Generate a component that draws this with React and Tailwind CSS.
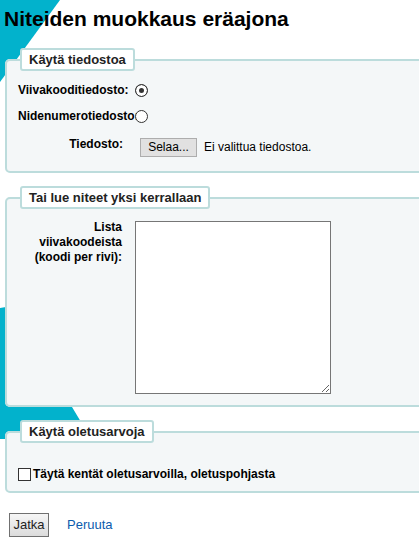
export default function App() {
  return (
    <div className="relative w-[419px] h-[546px] overflow-hidden bg-white text-black font-['Liberation_Sans',Arial,sans-serif]">
      {/* Background decoration */}
      <svg className="absolute inset-0" width="419" height="546" viewBox="0 0 419 546">
        <polygon points="0,0 60,0 0,82" fill="#02b2cc" />
        <polygon points="0,308 60,298 66,397 84,427 84,439 0,439" fill="#02b2cc" />
      </svg>

      <div className="relative">
        <h1 className="ml-[4px] pt-[7px] text-[21px] leading-[24px] font-bold">Niteiden muokkaus eräajona</h1>

        {/* Käytä tiedostoa */}
        <fieldset className="mt-[17px] ml-[5px] w-[440px] border-2 border-[#bcdcdc] rounded-[5px] bg-[#f4f7f8] px-[11px] pb-[14px]">
          <legend className="ml-[2px] px-[7px] py-[2px] border-2 border-[#bcdcdc] rounded-[3px] bg-white text-[13px] leading-[15px] font-bold text-[#222]">
            Käytä tiedostoa
          </legend>
          <div className="mt-[9px] flex items-center h-[20px]">
            <label htmlFor="barcode_file" className="w-[117px] shrink-0 whitespace-nowrap text-[12px] font-bold">
              Viivakooditiedosto:
            </label>
            <input
              id="barcode_file"
              type="radio"
              name="filecontent"
              defaultChecked
              className="appearance-none m-0 w-[13px] h-[13px] rounded-full border border-[#333] bg-white checked:bg-[#333] checked:shadow-[inset_0_0_0_3px_white]"
            />
          </div>
          <div className="mt-[6px] flex items-center h-[20px]">
            <label htmlFor="itemid_file" className="w-[117px] shrink-0 whitespace-nowrap text-[12px] font-bold">
              Nidenumerotiedosto:
            </label>
            <input
              id="itemid_file"
              type="radio"
              name="filecontent"
              className="appearance-none m-0 w-[13px] h-[13px] rounded-full border border-[#333] bg-white checked:bg-[#333] checked:shadow-[inset_0_0_0_3px_white]"
            />
          </div>
          <div className="mt-[11px] flex items-start">
            <label className="w-[105px] shrink-0 text-right text-[12px] leading-[14px] font-bold">Tiedosto:</label>
            <button className="ml-[17px] mt-[1px] w-[57px] h-[19px] border border-[#adadad] bg-[#e1e1e1] text-[12px] leading-[17px]">
              Selaa...
            </button>
            <span className="ml-[7px] mt-[1px] text-[12px] leading-[19px]">Ei valittua tiedostoa.</span>
          </div>
        </fieldset>

        {/* Tai lue niteet yksi kerrallaan */}
        <fieldset className="mt-[13px] ml-[5px] w-[440px] border-2 border-[#bcdcdc] rounded-[5px] bg-[#f4f7f8] px-[11px] pb-[11px]">
          <legend className="ml-[2px] px-[7px] py-[2px] border-2 border-[#bcdcdc] rounded-[3px] bg-white text-[13px] leading-[15px] font-bold text-[#222]">
            Tai lue niteet yksi kerrallaan
          </legend>
          <div className="mt-[11px] flex items-start">
            <label htmlFor="barcodelist" className="w-[104px] shrink-0 text-right text-[12px] leading-[15px] font-bold">
              Lista
              <br />
              viivakoodeista
              <br />
              (koodi per rivi):
            </label>
            <textarea
              id="barcodelist"
              className="ml-[13px] mt-[1px] w-[196px] h-[173px] border border-[#767676] bg-white"
            />
          </div>
        </fieldset>

        {/* Käytä oletusarvoja */}
        <fieldset className="mt-[13px] ml-[5px] w-[440px] border-2 border-[#bcdcdc] rounded-[5px] bg-[#f4f7f8] px-[11px] pb-[10px]">
          <legend className="ml-[2px] px-[7px] py-[2px] border-2 border-[#bcdcdc] rounded-[3px] bg-white text-[13px] leading-[15px] font-bold text-[#222]">
            Käytä oletusarvoja
          </legend>
          <div className="mt-[24px] flex items-center h-[14px]">
            <input
              id="usedefaults"
              type="checkbox"
              className="appearance-none m-0 w-[13px] h-[13px] border border-[#333] bg-white"
            />
            <label htmlFor="usedefaults" className="ml-[2px] text-[12px] font-bold">
              Täytä kentät oletusarvoilla, oletuspohjasta
            </label>
          </div>
        </fieldset>

        <div className="mt-[20px] ml-[9px] flex items-center">
          <button className="w-[40px] h-[24px] border border-[#707070] bg-gradient-to-b from-[#f6f6f6] to-[#dcdcdc] text-[13px] text-[#222]">
            Jatka
          </button>
          <a href="#" className="ml-[18px] text-[13px] text-[#0b5cad]">
            Peruuta
          </a>
        </div>
      </div>
    </div>
  )
}
